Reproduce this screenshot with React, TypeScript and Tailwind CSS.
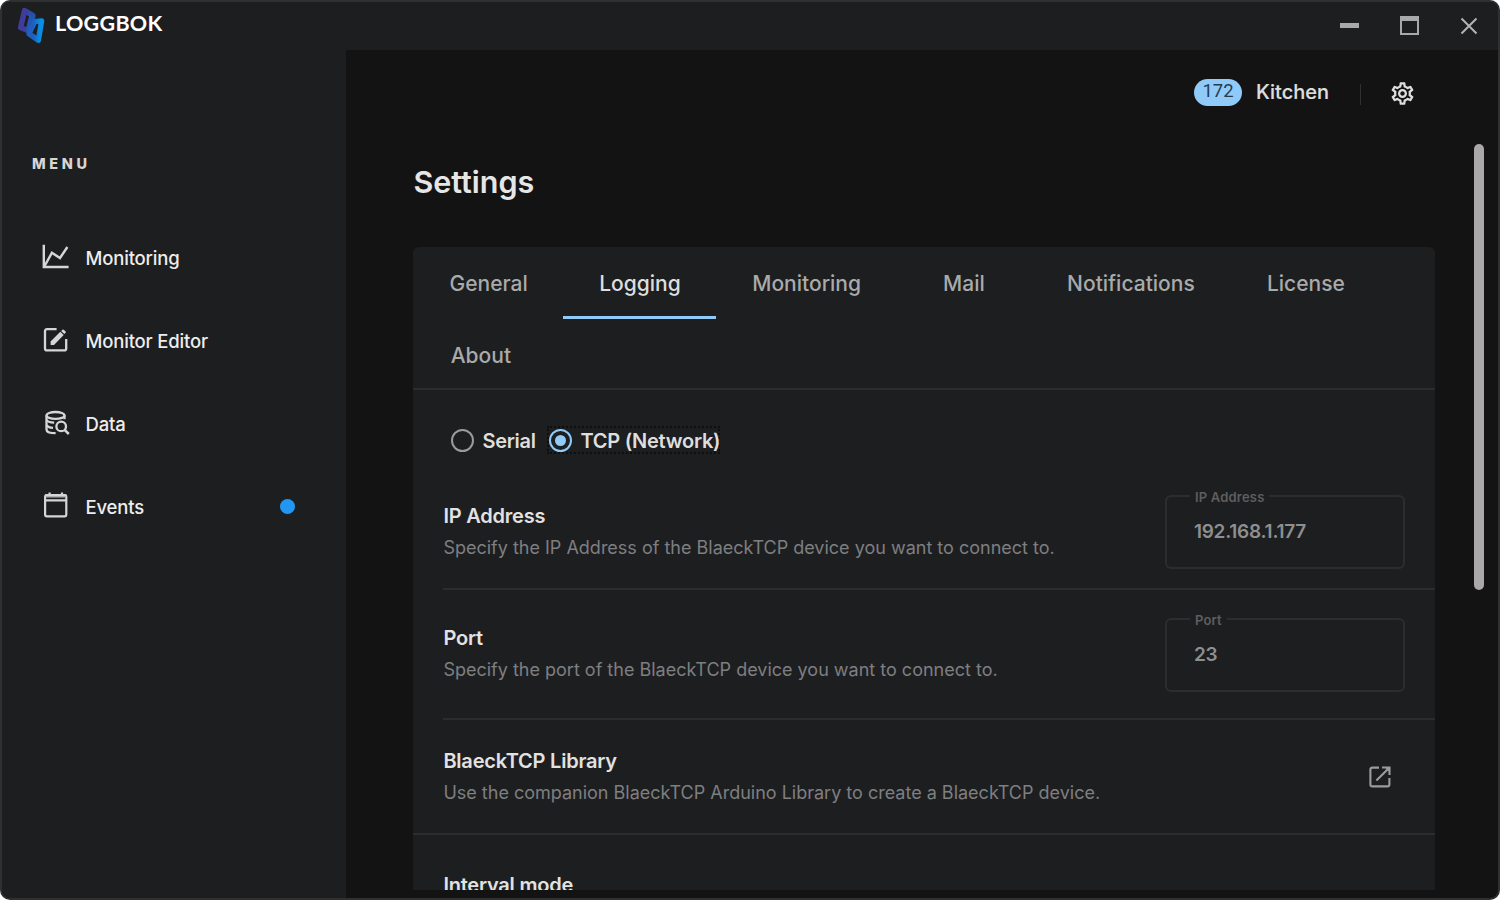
import type { ReactNode } from "react";
import { MdOutlineSettings } from "react-icons/md";

function Logo() {
  return (
    <svg width="28" height="38" viewBox="0 0 28 38" fill="none" strokeLinejoin="round">
      <defs>
        <linearGradient id="logoLeft" x1="2" y1="0" x2="17" y2="0" gradientUnits="userSpaceOnUse">
          <stop offset="0.5" stopColor="#403c9c" />
          <stop offset="0.75" stopColor="#2450ae" />
        </linearGradient>
        <linearGradient id="logoRight" x1="11" y1="0" x2="26" y2="0" gradientUnits="userSpaceOnUse">
          <stop offset="0.35" stopColor="#1f5fc0" />
          <stop offset="0.8" stopColor="#068fe4" />
        </linearGradient>
      </defs>
      <path d="M7.6 3.6 L16 8.6 L11.8 24 L3.6 20.6 Z" stroke="url(#logoLeft)" strokeWidth="5.4" />
      <path d="M13.2 9.5 L16.5 11 L13 25 L9.8 23 Z" fill="#2257b6" stroke="#2257b6" strokeWidth="2.4" />
      <path d="M17.6 14.6 L24.6 14 L21.3 33.2 L12 26.8 Z" stroke="url(#logoRight)" strokeWidth="5.4" />
    </svg>
  );
}

function ChartIcon() {
  return (
    <svg width="28" height="26" viewBox="0 0 28 26" fill="none" stroke="#d6d6d6" strokeWidth="2.4">
      <path d="M1.8 .8V23H26.6" />
      <path d="M2.6 22 L9.9 8.8 L18 14 L25.4 3" />
    </svg>
  );
}

function EditIcon() {
  return (
    <svg width="28" height="26" viewBox="0 0 28 26" fill="none" stroke="#d6d6d6" strokeWidth="2.3">
      <path d="M14.6 2.2H5Q3 2.2 3 4.2V21.4Q3 23.4 5 23.4H22.2Q24.2 23.4 24.2 21.4V12" />
      <path d="M8.6 18V14.4L18.3 4.7L21.7 8L12 18Z" fill="#d6d6d6" stroke="none" />
      <path d="M19.1 4L20.5 2.7Q21.1 2.2 21.7 2.7L23.6 4.6Q24.1 5.2 23.6 5.8L22.3 7.1Z" fill="#d6d6d6" stroke="none" />
    </svg>
  );
}

function DataIcon() {
  return (
    <svg width="28" height="26" viewBox="0 0 28 26" fill="none" stroke="#d6d6d6" strokeWidth="2.3">
      <g transform="translate(-0.8 0.2)">
        <ellipse cx="14.3" cy="5.2" rx="9" ry="3.4" />
        <path d="M5.3 5.2V19.2C5.3 21.4 9 22.9 14.4 22.9" />
        <path d="M23.3 5.2V9" />
        <path d="M5.3 9.8C6.3 11.6 9 12.3 13 12.5" />
        <path d="M5.3 14.9C6.2 16.6 8.6 17.5 11.8 17.7" />
        <circle cx="20" cy="16.2" r="4.8" />
        <path d="M23.4 19.6L27.6 23.8" strokeWidth="2.5" />
      </g>
    </svg>
  );
}

function CalendarIcon() {
  return (
    <svg width="28" height="28" viewBox="0 0 28 28" fill="none" stroke="#d6d6d6" strokeWidth="2.2">
      <rect x="3.1" y="3.2" width="21.2" height="21.2" rx="1.8" />
      <path d="M4 4.4H23.6" stroke="#8d8e8e" strokeWidth="2.6" />
      <path d="M3.1 3.4H24.3M3.1 8.4H24.3M7.6 .4V4M20 .4V4" />
    </svg>
  );
}

function ExternalIcon() {
  return (
    <svg width="24" height="24" viewBox="0 0 24 24" fill="none" stroke="#9b9c9c" strokeWidth="2.1">
      <path d="M11 2.6H4.4Q2.4 2.6 2.4 4.6V19.4Q2.4 21.4 4.4 21.4H19.4Q21.4 21.4 21.4 19.4V13" />
      <path d="M14 2.5H21.5V10M21 3L8.4 15.6" />
      <path d="M17 2.5H21.5V7Z" fill="#9b9c9c" stroke="none" />
    </svg>
  );
}

function NavItem({ icon, label, badge }: { icon: ReactNode; label: string; badge?: boolean }) {
  return (
    <a className="flex h-[83px] items-center pl-[39.5px] pr-[51px]">
      <span className="-mt-px flex w-[28px] justify-center">{icon}</span>
      <span className="ml-[16px] mt-[2px] text-[18.5px] font-medium leading-6 tracking-[-0.18px] text-[#ededed]">
        {label}
      </span>
      {badge && <span className="ml-auto size-[15px] rounded-full bg-[#2196f3]" />}
    </a>
  );
}

function Field({ label, value }: { label: string; value: string }) {
  return (
    <div className="relative h-[74px] w-[240px] shrink-0 rounded-[6px] border-2 border-[#2c2d2f] pl-[27px] pt-[23px]">
      <span className="absolute -top-[8px] left-[23px] bg-[#1d1e20] px-[5px] text-[13px] font-semibold leading-4 tracking-[0.2px] text-[#5d5e5f]">
        {label}
      </span>
      <div className="text-[19px] font-semibold leading-6 tracking-[-0.25px] text-[#8e8f8f]">{value}</div>
    </div>
  );
}

function RowText({ title, text }: { title: string; text?: string }) {
  return (
    <div>
      <h2 className="text-[20px] font-semibold leading-8 tracking-[-0.22px] text-[#e2e2e2]">{title}</h2>
      {text && (
        <p className="whitespace-nowrap text-[18px] leading-8 text-[#7e7f80]">{text}</p>
      )}
    </div>
  );
}

const tabs = [
  { label: "General", width: "w-[149.5px]" },
  { label: "Logging", width: "w-[153px]", active: true },
  { label: "Monitoring", width: "w-[180.5px]" },
  { label: "Mail", width: "w-[134px]" },
  { label: "Notifications", width: "w-[200px]" },
  { label: "License", width: "w-[150px]" },
  { label: "About", width: "w-[134px]" },
];

export default function App() {
  return (
    <div className="h-[900px] w-[1500px] overflow-hidden bg-white font-['Inter',sans-serif]">
      <div className="flex h-full flex-col overflow-hidden rounded-[10px] border-2 border-[#2f3031] bg-[#131313]">
        <header className="flex h-[47.5px] shrink-0 items-center bg-[#1d1e20] pl-[15px] pr-[20.5px]">
          <Logo />
          <span className="-mt-[5px] ml-[10px] font-['Lato',sans-serif] text-[21.5px] font-bold leading-6 tracking-[0.3px] text-white">
            LOGGBOK
          </span>
          <div className="ml-auto flex items-center gap-[41px]">
            <span className="h-[5px] w-[19px] bg-[#a9a9a9]" />
            <span className="h-[19px] w-[19px] border-2 border-t-[5px] border-[#a9a9a9]" />
            <svg width="18" height="18" viewBox="0 0 18 18" stroke="#b3b3b3" strokeWidth="2">
              <path d="M1.5 1.5L16.5 16.5M16.5 1.5L1.5 16.5" />
            </svg>
          </div>
        </header>

        <div className="flex min-h-0 flex-1">
          <aside className="w-[344.4px] shrink-0 bg-[#1d1e20]">
            <div className="pl-[30px] pt-[104px] text-[14.5px] font-extrabold leading-5 tracking-[3.6px] text-[#d6d6d6]">
              MENU
            </div>
            <nav className="mt-[42px] flex flex-col">
              <NavItem icon={<ChartIcon />} label="Monitoring" />
              <NavItem icon={<EditIcon />} label="Monitor Editor" />
              <NavItem icon={<DataIcon />} label="Data" />
              <NavItem icon={<CalendarIcon />} label="Events" badge />
            </nav>
          </aside>

          <main className="flex min-w-0 flex-1 flex-col pl-[67px]">
            <div className="mt-7 flex h-7 shrink-0 items-center justify-end pr-[82px]">
              <span className="mt-px flex h-[27px] w-[48px] items-center justify-center rounded-full bg-[#90caf9] font-['Roboto',sans-serif] text-[18.5px] text-[#263c4e]">
                172
              </span>
              <span className="ml-[14px] text-[20px] font-medium text-[#dedede] [-webkit-text-stroke:0.2px_#dedede]">
                Kitchen
              </span>
              <span className="ml-[31px] mt-[5px] h-[21px] w-px bg-[#303030]" />
              <MdOutlineSettings className="ml-7 mt-1 size-[27px] text-[#dedede]" />
            </div>

            <div className="flex min-h-0 flex-1">
              <section className="flex w-[1022px] flex-col">
                <h1 className="mt-[56px] text-[30.5px] font-semibold leading-10 text-[#e6e6e6]">Settings</h1>

                <div className="mb-2 mt-[45px] min-h-0 flex-1 overflow-hidden rounded-t-[6px] bg-[#1d1e20]">
                  <div className="flex h-[143.5px] flex-wrap content-start border-b-2 border-[#2b2c2e]">
                    {tabs.map((t) => (
                      <div
                        key={t.label}
                        className={`flex h-[72px] justify-center border-b-[3px] pl-px pt-[23px] text-[21px] font-medium leading-7 ${t.width} ${
                          t.active ? "border-[#90caf9] text-[#dedede]" : "border-transparent text-[#a9aaaa]"
                        }`}
                      >
                        {t.label}
                      </div>
                    ))}
                  </div>

                  <div className="mt-[36px] flex h-7 items-center pl-[38px] text-[20px] font-semibold tracking-[-0.25px] text-[#dedede]">
                    <span className="size-[23px] rounded-full border-2 border-[#9a9b9b]" />
                    <span className="ml-[8px] mt-[2px] w-[53px] whitespace-nowrap">Serial</span>
                    <span className="ml-[12px] flex h-7 w-[173px] items-center border-2 border-dotted border-[#0e0e0f]">
                      <span className="flex size-[23px] shrink-0 items-center justify-center rounded-full border-2 border-[#90caf9]">
                        <span className="size-[11px] rounded-full bg-[#90caf9]" />
                      </span>
                      <span className="ml-[8px] mt-[2px] whitespace-nowrap">TCP (Network)</span>
                    </span>
                  </div>

                  <div className="ml-[30px] mt-[40.5px] flex h-[95px] items-start justify-between border-b-2 border-[#2b2c2e] pr-[30.5px]">
                    <div className="pt-[5.5px]">
                      <RowText title="IP Address" text="Specify the IP Address of the BlaeckTCP device you want to connect to." />
                    </div>
                    <Field label="IP Address" value="192.168.1.177" />
                  </div>

                  <div className="ml-[30px] flex h-[130px] items-start justify-between border-b-2 border-[#2b2c2e] pr-[30.5px] pt-[28px]">
                    <div className="pt-[4.5px]">
                      <RowText title="Port" text="Specify the port of the BlaeckTCP device you want to connect to." />
                    </div>
                    <Field label="Port" value="23" />
                  </div>

                  <div className="flex h-[115px] items-center justify-between border-b-2 border-[#2b2c2e] pl-[30px] pr-[43.5px] pt-px">
                    <RowText
                      title="BlaeckTCP Library"
                      text="Use the companion BlaeckTCP Arduino Library to create a BlaeckTCP device."
                    />
                    <ExternalIcon />
                  </div>

                  <div className="pl-[30px] pt-[34px]">
                    <RowText title="Interval mode" />
                  </div>
                </div>
              </section>

              <div className="ml-[38.6px] mt-[38.5px] h-[446px] w-[10px] rounded-full bg-[#aaa8a9]" />
            </div>
          </main>
        </div>
      </div>
    </div>
  );
}
